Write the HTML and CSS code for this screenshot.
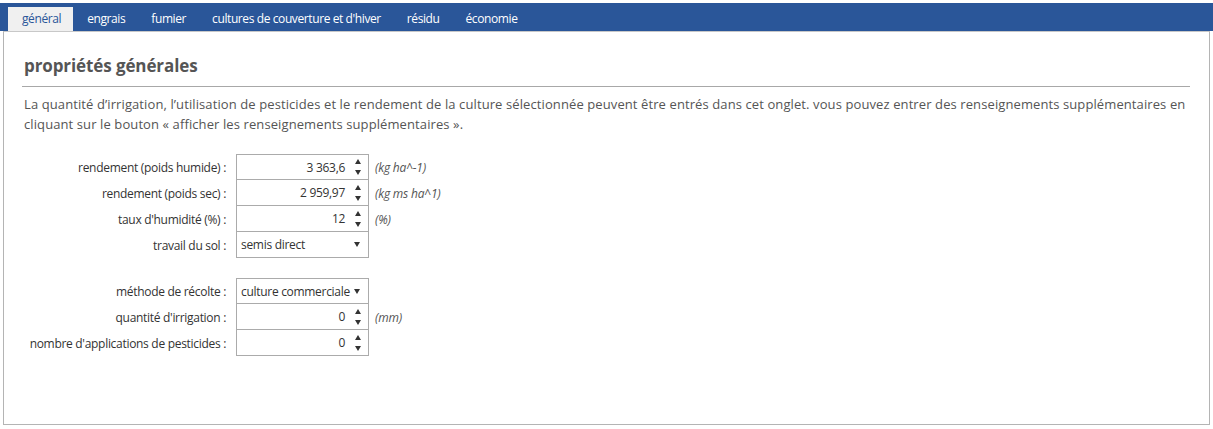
FILE: index.html
```html
<!DOCTYPE html>
<html lang="fr">
<head>
<meta charset="utf-8">
<link rel="stylesheet" href="styles.css">
</head>
<body>
<div class="app">
  <nav class="tabs">
    <span class="tab active">général</span>
    <span class="tab">engrais</span>
    <span class="tab">fumier</span>
    <span class="tab">cultures de couverture et d'hiver</span>
    <span class="tab">résidu</span>
    <span class="tab">économie</span>
  </nav>
  <section class="panel">
    <h1 class="title">propriétés générales</h1>
    <p class="desc">La quantité d’irrigation, l’utilisation de pesticides et le rendement de la culture sélectionnée peuvent être entrés dans cet onglet. vous pouvez entrer des renseignements supplémentaires en cliquant sur le bouton « afficher les renseignements supplémentaires ».</p>
    <div class="form">
      <div class="row"><label class="lbl">rendement (poids humide) :</label><div class="field num"><span class="val">3 363,6</span><span class="spin"><i class="up"></i><i class="down"></i></span></div><span class="unit">(kg ha^-1)</span></div>
      <div class="row"><label class="lbl">rendement (poids sec) :</label><div class="field num"><span class="val">2 959,97</span><span class="spin"><i class="up"></i><i class="down"></i></span></div><span class="unit">(kg ms ha^1)</span></div>
      <div class="row"><label class="lbl">taux d'humidité (%) :</label><div class="field num"><span class="val">12</span><span class="spin"><i class="up"></i><i class="down"></i></span></div><span class="unit">(%)</span></div>
      <div class="row"><label class="lbl">travail du sol :</label><div class="field sel"><span class="opt">semis direct</span><i class="caret"></i></div></div>
      <div class="spacer"></div>
      <div class="row"><label class="lbl">méthode de récolte :</label><div class="field sel"><span class="opt">culture commerciale</span><i class="caret"></i></div></div>
      <div class="row"><label class="lbl">quantité d'irrigation :</label><div class="field num"><span class="val">0</span><span class="spin"><i class="up"></i><i class="down"></i></span></div><span class="unit">(mm)</span></div>
      <div class="row"><label class="lbl">nombre d'applications de pesticides :</label><div class="field num"><span class="val">0</span><span class="spin"><i class="up"></i><i class="down"></i></span></div></div>
    </div>
  </section>
</div>
</body>
</html>
```
FILE: styles.css
```css
html, body { margin: 0; padding: 0; }
body {
  background: #ffffff;
  font-family: "Open Sans", "Noto Sans", sans-serif;
  color: #333;
  width: 1213px;
  height: 429px;
  overflow: hidden;
}
.app { padding-top: 3px; }
.tabs {
  background: #2a5699;
  height: 28px;
  display: flex;
  align-items: flex-end;
  padding-left: 8px;
}
.tab {
  height: 24px;
  line-height: 23px;
  padding: 0 12px 0 14px;
  font-size: 12px;
  color: #fff;
  letter-spacing: -0.4px;
  box-sizing: border-box;
}
.tab.active {
  background: #f0f0f0;
  color: #2a5699;
}
.panel {
  margin: 0 3px 0 3px;
  height: 394px;
  border: 1px solid #b4b4b4;
  border-top-color: #c8c8c8;
  background: #fff;
  padding: 0 19px 0 18px;
  box-sizing: border-box;
}
.title {
  margin: 0;
  padding-top: 22px;
  padding-bottom: 9px;
  padding-left: 2px;
  font-size: 17px;
  font-weight: 700;
  color: #555;
  letter-spacing: -0.1px;
  border-bottom: 1px solid #a8a8a8;
  line-height: 23px;
}
.desc {
  margin: 7px 0 0 2px;
  font-size: 13px;
  line-height: 20px;
  color: #555;
  letter-spacing: 0.1px;
}
.form { margin-top: 20px; display: flex; flex-direction: column; }
.row { display: flex; align-items: center; height: 26px; }
.spacer { height: 20px; }
.lbl {
  width: 204px;
  text-align: right;
  font-size: 12px;
  letter-spacing: -0.3px;
  color: #333;
  margin-right: 10px;
}
.field {
  width: 133px;
  height: 26px;
  border: 1px solid #ababab;
  box-sizing: border-box;
  display: flex;
  align-items: center;
  background: #fff;
  font-size: 12px;
  letter-spacing: -0.3px;
  color: #333;
}
.row + .row .field { margin-top: -1px; height: 27px; }
.num .val { flex: 1; text-align: right; padding-right: 9px; }
.spin { width: 8px; display: flex; flex-direction: column; gap: 6px; margin-right: 6px; }
.spin i { display: block; width: 0; height: 0; border-left: 3px solid transparent; border-right: 3px solid transparent; margin-left: 1px; }
.spin .up { border-bottom: 5px solid #333; }
.spin .down { border-top: 5px solid #333; }
.sel .opt { flex: 1; padding-left: 4px; }
.caret { display: block; width: 0; height: 0; border-left: 3.5px solid transparent; border-right: 3.5px solid transparent; border-top: 5px solid #333; margin-right: 8px; }
.unit { margin-left: 6px; font-size: 12px; font-style: italic; color: #555; letter-spacing: -0.2px; }
```
